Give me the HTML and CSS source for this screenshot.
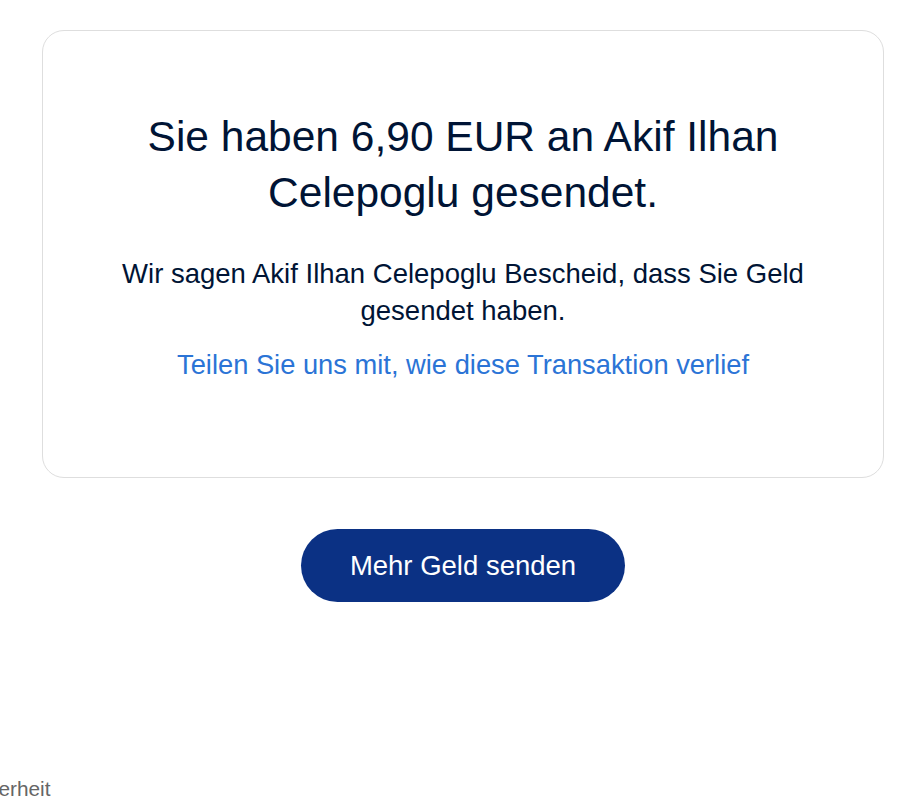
FILE: index.html
```html
<!DOCTYPE html>
<html lang="de">
<head>
    <meta charset="UTF-8">
    <meta name="viewport" content="width=device-width, initial-scale=1.0">
    <title>Geld gesendet</title>
    <link rel="stylesheet" href="styles.css">
</head>
<body>
    <div class="page">
        <div class="card">
            <h1 class="title">Sie haben 6,90 EUR an Akif Ilhan Celepoglu gesendet.</h1>
            <p class="note">Wir sagen Akif Ilhan Celepoglu Bescheid, dass Sie Geld gesendet haben.</p>
            <a class="feedback" href="#">Teilen Sie uns mit, wie diese Transaktion verlief</a>
        </div>
        <div class="actions">
            <button class="send-more">Mehr Geld senden</button>
        </div>
    </div>
    <footer class="footer">
        <a class="footer-link" href="#">Sicherheit</a>
    </footer>
</body>
</html>
```

FILE: styles.css
```css
body {
    font-family: "Liberation Sans", Arial, sans-serif;
    margin: 0;
    padding: 0;
    background-color: #fff;
    color: #001435;
    overflow: hidden;
}

.page {
    padding: 30px 36px 0 42px;
}

.card {
    border: 1px solid #dedede;
    border-radius: 22px;
    box-sizing: border-box;
    height: 448px;
    padding: 78px 60px 0;
    text-align: center;
}

.title {
    font-size: 42.5px;
    font-weight: normal;
    line-height: 56px;
    margin: 0 auto;
    max-width: 660px;
}

.note {
    font-size: 27.5px;
    line-height: 37px;
    margin: 34px auto 0;
    max-width: 700px;
}

.feedback {
    display: inline-block;
    font-size: 27.3px;
    line-height: 37px;
    margin-top: 17px;
    color: #2b74d6;
    text-decoration: none;
}

.actions {
    display: flex;
    justify-content: center;
    margin-top: 51px;
}

.send-more {
    width: 324px;
    height: 73px;
    border: none;
    border-radius: 37px;
    background-color: #0b3184;
    color: #fff;
    font-family: "Liberation Sans", Arial, sans-serif;
    font-size: 27.5px;
    cursor: pointer;
}

.footer {
    margin-top: 175px;
    font-size: 20.8px;
    line-height: 24px;
}

.footer-link {
    display: inline-block;
    margin-left: -42px;
    color: #666;
    text-decoration: none;
}
```
